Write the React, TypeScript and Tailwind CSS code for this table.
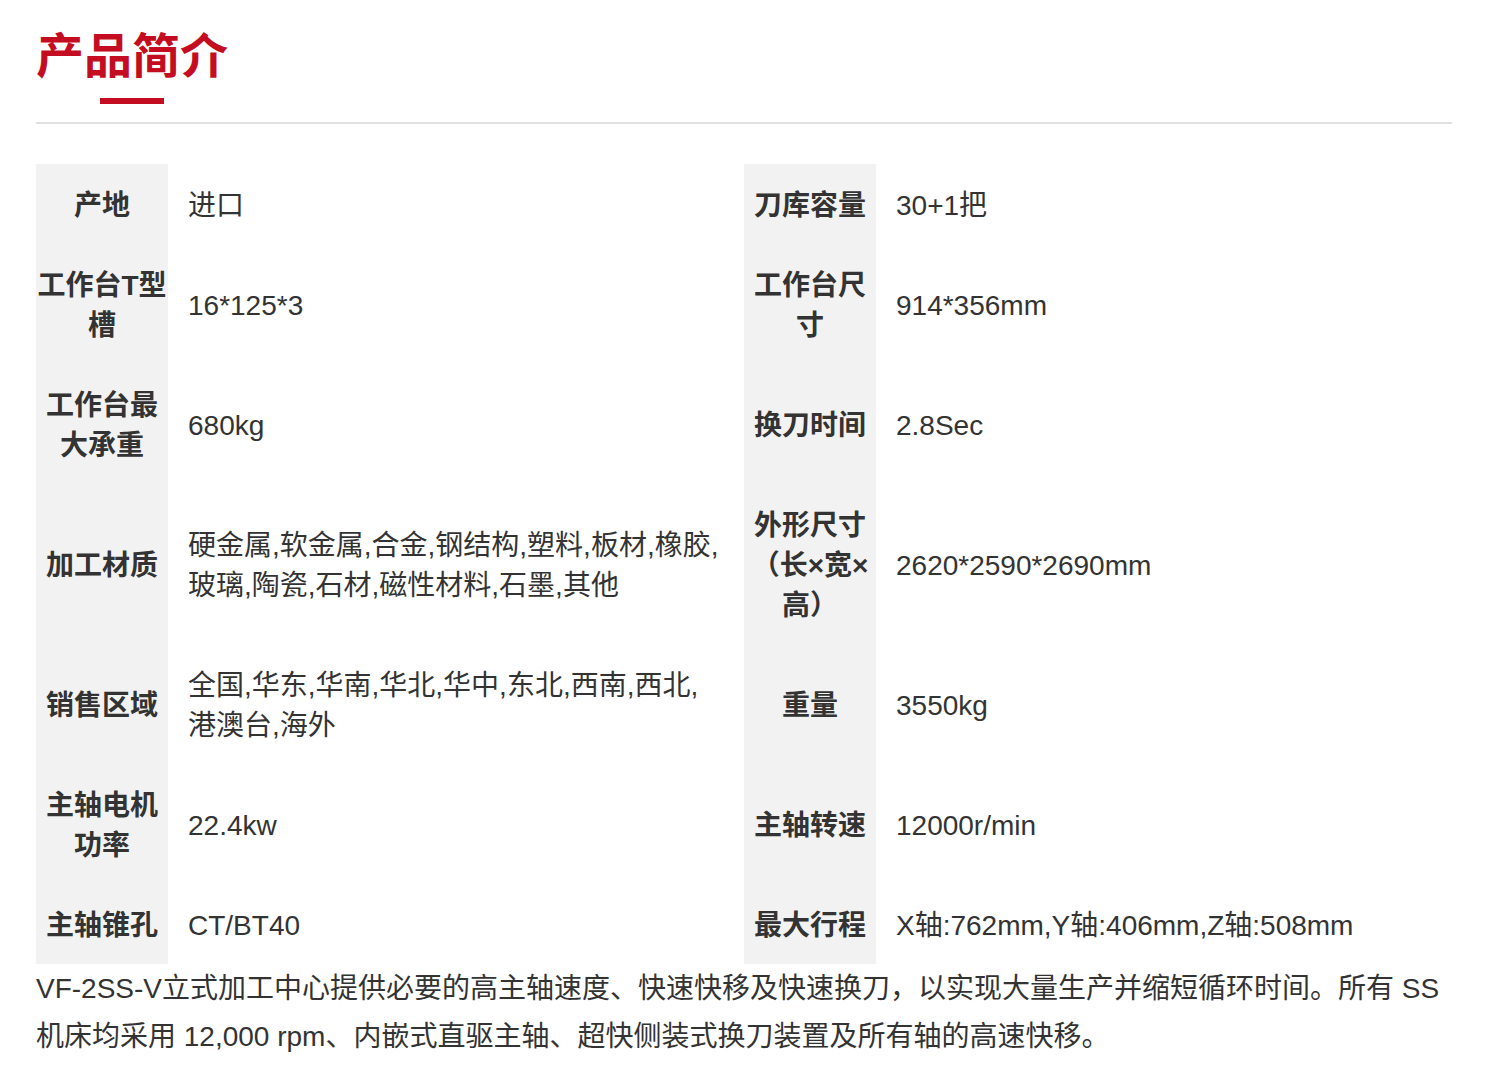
import React from "react";

type Spec = { label: string; value: string };

const rows: [Spec, Spec][] = [
  [
    { label: "产地", value: "进口" },
    { label: "刀库容量", value: "30+1把" },
  ],
  [
    { label: "工作台T型槽", value: "16*125*3" },
    { label: "工作台尺寸", value: "914*356mm" },
  ],
  [
    { label: "工作台最大承重", value: "680kg" },
    { label: "换刀时间", value: "2.8Sec" },
  ],
  [
    {
      label: "加工材质",
      value:
        "硬金属,软金属,合金,钢结构,塑料,板材,橡胶,玻璃,陶瓷,石材,磁性材料,石墨,其他",
    },
    { label: "外形尺寸（长×宽×高）", value: "2620*2590*2690mm" },
  ],
  [
    {
      label: "销售区域",
      value: "全国,华东,华南,华北,华中,东北,西南,西北,港澳台,海外",
    },
    { label: "重量", value: "3550kg" },
  ],
  [
    { label: "主轴电机功率", value: "22.4kw" },
    { label: "主轴转速", value: "12000r/min" },
  ],
  [
    { label: "主轴锥孔", value: "CT/BT40" },
    { label: "最大行程", value: "X轴:762mm,Y轴:406mm,Z轴:508mm" },
  ],
];

function Cells({ spec }: { spec: Spec }) {
  return (
    <>
      <div className="bg-[#f2f2f2] flex items-center justify-center text-center font-bold pt-[22px] pb-[18px] text-[#333]">
        <span>{spec.label}</span>
      </div>
      <div className="flex items-center px-5 pt-[22px] pb-[18px] text-[#333]">
        <span>{spec.value}</span>
      </div>
    </>
  );
}

export default function App() {
  return (
    <div
      className="bg-white w-[1500px] min-h-[1084px] pl-[36px] pr-[48px] text-[28px] leading-[40px]"
      style={{ fontFamily: '"Liberation Sans", "Noto Sans CJK SC", sans-serif' }}
    >
      <div className="pt-[25px]">
        <h1 className="text-[48px] leading-[64px] font-bold text-[#c50d22]">
          产品简介
        </h1>
        <div className="ml-[64px] mt-[9px] w-[64px] h-[6px] bg-[#c50d22]" />
        <div className="mt-[18px] h-[2px] bg-[#e0e0e0]" />
      </div>

      <div className="mt-[40px] grid grid-cols-[132px_576px_132px_576px]">
        {rows.map((pair, i) => (
          <React.Fragment key={i}>
            <Cells spec={pair[0]} />
            <Cells spec={pair[1]} />
          </React.Fragment>
        ))}
      </div>

      <p className="pt-[1px] leading-[48px] text-[#333]">
        VF-2SS-V立式加工中心提供必要的高主轴速度、快速快移及快速换刀，以实现大量生产并缩短循环时间。所有
        SS 机床均采用 12,000 rpm、内嵌式直驱主轴、超快侧装式换刀装置及所有轴的高速快移。
      </p>
    </div>
  );
}
